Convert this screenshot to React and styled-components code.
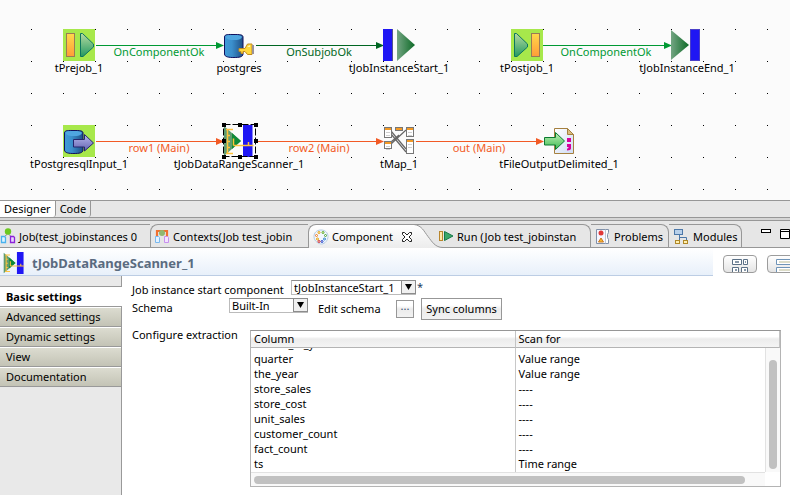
import React, { useLayoutEffect, useRef } from "react";
import styled, { createGlobalStyle } from "styled-components";

const Global = createGlobalStyle`
  * { box-sizing: border-box; }
  body {
    margin: 0;
    background: #fff;
    color: #000;
    font-family: "Lucida Grande", "Noto Sans", sans-serif;
    font-size: 11px;
    line-height: 13px;
    overflow: hidden;
  }
  button, select { font: inherit; color: inherit; margin: 0; }
  svg { display: block; flex: none; }
`;

const Page = styled.div`
  display: flex;
  flex-direction: column;
  min-height: 100vh;
`;

/* ---------- design canvas ---------- */

const Canvas = styled.section`
  position: relative;
  height: 200px;
  background: #fbfbfb;
  overflow: hidden;
`;

const Wires = styled.svg`
  width: 100%;
  height: 100%;
`;

const Node = styled.div`
  position: absolute;
  left: ${(p) => p.$x}px;
  top: ${(p) => p.$y}px;
  width: 32px;
  display: flex;
  flex-direction: column;
  align-items: center;
  white-space: nowrap;
`;

const WireLabel = styled.span`
  position: absolute;
  left: ${(p) => p.$x}px;
  top: ${(p) => p.$y}px;
  width: 96px;
  text-align: center;
  white-space: nowrap;
  color: ${(p) => p.$color};
`;

const GREEN = "#009933";
const DARK = "#006622";
const ORANGE = "#f25a25";

const wires = [
  { x1: 96, x2: 224, y: 45, label: "OnComponentOk", color: GREEN },
  { x1: 256, x2: 384, y: 45, label: "OnSubjobOk", color: DARK },
  { x1: 543, x2: 672, y: 45, label: "OnComponentOk", color: GREEN },
  { x1: 96, x2: 224, y: 141, label: "row1 (Main)", color: ORANGE },
  { x1: 256, x2: 384, y: 141, label: "row2 (Main)", color: ORANGE },
  { x1: 416, x2: 544, y: 141, label: "out (Main)", color: ORANGE },
];

const Gradients = () => (
  <defs>
    <linearGradient id="orange" x2="0" y2="1">
      <stop stopColor="#ffd84a" />
      <stop offset="1" stopColor="#ff9c38" />
    </linearGradient>
    <linearGradient id="green" x2="0" y2="1">
      <stop stopColor="#b5d9a0" />
      <stop offset="1" stopColor="#239a62" />
    </linearGradient>
    <linearGradient id="forest">
      <stop stopColor="#74a583" />
      <stop offset="1" stopColor="#0c6a26" />
    </linearGradient>
    <linearGradient id="barrel">
      <stop stopColor="#3f9bd8" />
      <stop offset="0.4" stopColor="#3b8fcc" />
      <stop offset="1" stopColor="#1f4f86" />
    </linearGradient>
    <linearGradient id="violet" x2="0" y2="1">
      <stop stopColor="#b9b9ee" />
      <stop offset="1" stopColor="#6262b0" />
    </linearGradient>
    <linearGradient id="arrow" x2="0" y2="1">
      <stop stopColor="#c2f2b8" />
      <stop offset="1" stopColor="#3cba52" />
    </linearGradient>
    <linearGradient id="sheet" x2="1" y2="1">
      <stop stopColor="#fff" />
      <stop offset="1" stopColor="#cfdcf4" />
    </linearGradient>
    <pattern id="dots" width="32" height="32" patternUnits="userSpaceOnUse">
      <rect x="31" y="29" width="1" height="1" />
    </pattern>
  </defs>
);

const Icon32 = ({ children }) => (
  <svg width="32" height="32" viewBox="0 0 32 32" aria-hidden="true">{children}</svg>
);

const PrejobIcon = () => (
  <Icon32>
    <rect width="32" height="32" fill="#a7e84b" />
    <rect x="3.5" y="4.5" width="8" height="23" fill="url(#orange)" stroke="#9a7a55" />
    <path d="M17.5 4.5h2L30.500 15v3L20 27.500h-2.500z" fill="url(#green)" stroke="#0d7560" />
  </Icon32>
);

const PostjobIcon = () => (
  <Icon32>
    <rect width="32" height="32" fill="#a7e84b" />
    <path d="M3.500 4.500h2L16.500 15v3L6 27.500h-2.500z" fill="url(#green)" stroke="#0d7560" />
    <rect x="20.500" y="4.500" width="8" height="23" fill="url(#orange)" stroke="#9a7a55" />
  </Icon32>
);

const Barrel = () => (
  <>
    <path d="M1.500 8c0-3 4-2.500 9.500-2.500s9 0 9 2.500v17c0 3-4 3.500-9 3.500s-9.500-.5-9.500-3.500z" fill="url(#barrel)" stroke="#10105e" />
    <path d="M2.500 7.500c1-1.500 4-1.500 8.500-1.500s7.500.5 8 2c-1 2.500-4 3-8 3s-8-.5-8.500-3.500z" fill="#4fa6e0" />
  </>
);

const PostgresIcon = () => (
  <Icon32>
    <Barrel />
    <path d="M16 19.500h6l2.500-4.500h4.500v10.500h-4.500L22 22.500h-2v2h-2v-2h-2z" fill="#ffd83c" stroke="#c08a20" />
    <path d="M24 18l3-2v2z" fill="#fff6b8" />
    <rect x="29" y="16" width="2" height="9" fill="#9a929a" />
  </Icon32>
);

const PostgresInputIcon = () => (
  <Icon32>
    <rect width="32" height="32" fill="#a7e84b" />
    <Barrel />
    <path d="M10.500 14.500h11v-5l9 8.500-9 8v-4h-11z" fill="url(#violet)" stroke="#26266e" />
  </Icon32>
);

const StartIcon = () => (
  <Icon32>
    <rect width="9" height="32" fill="#1f16f4" />
    <path d="M9.500 0v32" stroke="#55558a" />
    <path d="M14 0l18 16-18 16z" fill="url(#forest)" />
  </Icon32>
);

const EndIcon = () => (
  <Icon32>
    <path d="M0 1l18 15L0 31z" fill="url(#forest)" />
    <rect x="19.500" y="0.500" width="9" height="31" fill="#1f16f4" stroke="#4a3fc8" />
  </Icon32>
);

const ScannerArt = () => (
  <>
    <path d="M1 1l17 15L1 31z" fill="#5f9c70" />
    <path d="M9 8l9 8-9 8z" fill="#0f8a38" />
    <rect x="20" y="0" width="9.500" height="32" fill="#1f16f4" />
    <path d="M4.500 4v24M3 4.500h7M4 10.500h3M4 16.500h3M4 22.500h3M3 28.500h7" stroke="#ffc23c" fill="none" strokeWidth="1.500" />
    <path d="M10.500 13.500v7M10.500 20.500h20M25.500 17v4" stroke="#ffc23c" fill="none" strokeWidth="1.500" />
  </>
);

const ScannerIcon = () => (
  <Icon32><ScannerArt /></Icon32>
);

const Selection = styled.svg`
  position: absolute;
  left: -1px;
  top: -2px;
`;

const SelectionHandles = () => (
  <Selection width="37" height="37" aria-hidden="true">
    <rect x="1.500" y="1.500" width="32" height="32" fill="none" stroke="#000" strokeDasharray="7 2" />
    {[0, 16, 32].map((x) =>
      [0, 16, 32].map((y) =>
        x === 16 && y === 16 ? null : <rect key={`${x}-${y}`} x={x} y={y} width="4" height="4" />
      )
    )}
  </Selection>
);

const MapTable = ({ x, y, w, h }) => (
  <g>
    <rect x={x + 0.5} y={y + 0.5} width={w} height={h} fill="#fff" stroke="#777" />
    <rect x={x + 1} y={y + 1} width={w - 1} height="2" fill="#f39a26" />
    {h > 6 && <path d={`M${x + 2} ${y + 5.5}h${w - 3}M${x + 2} ${y + 8.500}h${w - 3}`} stroke="#d0d0d0" />}
  </g>
);

const MapIcon = () => (
  <Icon32>
    <path d="M8 6l15 18M8 9l15 18M8 19L23 5M8 17l8-7" stroke="#666" strokeWidth="1.200" />
    <MapTable x={1} y={2} w={7} h={10} />
    <MapTable x={12} y={2} w={7} h={3} />
    <MapTable x={23} y={2} w={7} h={9} />
    <MapTable x={1} y={16} w={7} h={7} />
    <MapTable x={23} y={14} w={7} h={14} />
  </Icon32>
);

const FileIcon = () => (
  <Icon32>
    <path d="M11.500 3.500h13l6 6v19h-19z" fill="url(#sheet)" stroke="#a5803f" />
    <path d="M24.500 3.500v6h6z" fill="#d9bd7c" stroke="#a5803f" />
    <path d="M24 13h4v4h-4zM24 19h4v4.500c0 1-1.500 2-4 2v-2c1 0 1.500-.5 1.500-1.500H24z" fill="#d6009a" />
    <path d="M1.500 12.500h11v-5l9 8.500-9 8.500v-4.500h-11z" fill="url(#arrow)" stroke="#0c7a30" />
  </Icon32>
);

const nodes = [
  { x: 63, y: 29, label: "tPrejob_1", Icon: PrejobIcon },
  { x: 223, y: 29, label: "postgres", Icon: PostgresIcon },
  { x: 383, y: 29, label: "tJobInstanceStart_1", Icon: StartIcon },
  { x: 511, y: 29, label: "tPostjob_1", Icon: PostjobIcon },
  { x: 671, y: 29, label: "tJobInstanceEnd_1", Icon: EndIcon },
  { x: 63, y: 125, label: "tPostgresqlInput_1", Icon: PostgresInputIcon },
  { x: 223, y: 125, label: "tJobDataRangeScanner_1", Icon: ScannerIcon, selected: true },
  { x: 383, y: 125, label: "tMap_1", Icon: MapIcon },
  { x: 543, y: 125, label: "tFileOutputDelimited_1", Icon: FileIcon },
];

/* ---------- editor page tabs ---------- */

const EditorTabs = styled.nav`
  display: flex;
  height: 18px;
  background: #e7e7e7;
  border-top: 1px solid #979797;
  border-bottom: 1px solid #979797;
`;

const EditorTab = styled.button`
  border: 0;
  border-right: 1px solid #979797;
  border-radius: 0 0 3px 0;
  padding: 0 4px 1px;
  background: ${(p) => (p.$active ? "#fff" : "transparent")};
`;

const Sash = styled.div`
  height: 3px;
  background: #d6d6d6;
  border-bottom: 1px solid #979797;
`;

/* ---------- view tabs ---------- */

const ViewBar = styled.nav`
  display: flex;
  height: 27px;
  padding-top: 3px;
  background: #e6e6e6;
  border-bottom: 1px solid #979797;
`;

const ViewTab = styled.button`
  display: flex;
  flex: 0 0 ${(p) => p.$width}px;
  align-items: center;
  gap: 3px;
  padding: 0 0 0 ${(p) => p.$pad}px;
  white-space: nowrap;
  background: transparent;
  border: 0 solid #979797;
  border-top-width: 1px;
  border-left-width: ${(p) => (p.$edge === "left" ? 1 : 0)}px;
  border-right-width: ${(p) => (p.$edge === "right" ? 1 : 0)}px;
  border-radius: ${(p) => (p.$edge === "left" ? "8px 0 0 0" : p.$edge === "right" ? "0 8px 0 0" : "0")};
`;

const ActiveTab = styled.div`
  display: flex;
  flex: 0 0 106px;
  height: 24px;
  align-items: center;
  gap: 3px;
  padding-left: 4px;
  white-space: nowrap;
  background: linear-gradient(#fff, #ececec);
  border: 1px solid #979797;
  border-width: 1px 0 0 1px;
  border-radius: 8px 0 0 0;
`;

const Slope = styled.svg`
  margin-right: -8px;
`;

const CloseButton = styled.button`
  padding: 0;
  border: 0;
  background: none;
  margin-left: 5px;
`;

const WindowButtons = styled.div`
  display: flex;
  flex: none;
  gap: 9px;
  padding-top: 4px;
  margin-left: auto;
  align-items: flex-start;
`;

const PlainButton = styled.button`
  padding: 0;
  border: 0;
  background: none;
`;

const Icon16 = ({ children }) => (
  <svg width="16" height="16" viewBox="0 0 16 16" aria-hidden="true">{children}</svg>
);

const JobIcon = () => (
  <Icon16>
    <path d="M7.500 6L4 9M8.500 6l4 4" stroke="#888" />
    <circle cx="8" cy="3.500" r="3.200" fill="#6cc820" />
    <path d="M1.500 8.500h3l1 1v5h-4z" fill="#dff3ff" stroke="#4ab2ee" strokeWidth="1.300" />
    <path d="M10.500 8.500h3l1 1v5h-4z" fill="#e8d6ff" stroke="#8c22d8" strokeWidth="1.300" />
  </Icon16>
);

const ContextsIcon = () => (
  <Icon16>
    <path d="M3 12V3h10v9" fill="none" stroke="#f07030" strokeWidth="2.200" />
    <circle cx="8" cy="5" r="3" fill="#90b870" />
    <path d="M1.500 8.500h3l1 1v5h-4z" fill="#e4f2ff" stroke="#7ab8ee" />
    <path d="M10.500 8.500h3l1 1v5h-4z" fill="#f4e4ff" stroke="#c890ee" />
  </Icon16>
);

const PaletteIcon = () => (
  <Icon16>
    <path d="M8 1c4.500 0 7 3 7 6.500S12 15 8.500 15C6 15 1 12.500 1 7.500 1 4 3.500 1 8 1z" fill="#f2f7ff" stroke="#b4cce4" />
    {[[6, 3.500, "#e8a000"], [10, 3.500, "#58a818"], [12.500, 6.500, "#48a030"], [3.500, 6.500, "#f07820"], [4.500, 10, "#e8a000"], [11.500, 10, "#2880c8"], [9, 12.500, "#2040c8"], [6, 12.500, "#d02828"]].map(([x, y, c]) => (
      <circle key={`${x}-${y}`} cx={x} cy={y} r="1" fill="#fff" stroke={c} />
    ))}
  </Icon16>
);

const RunIcon = () => (
  <Icon16>
    <rect x="1.500" y="3.500" width="3" height="9" fill="#ffe9a8" stroke="#b8862c" />
    <path d="M6.500 3.500L15 8l-8.500 4.500z" fill="#3ca868" stroke="#187848" />
  </Icon16>
);

const ProblemsIcon = () => (
  <Icon16>
    <path d="M1.500 1.500h9v14h-9z" fill="#f6f6ff" stroke="#8090a8" />
    <path d="M10.500 1.500h3v3l-1 2v3l1 2v4h-3" fill="#fff" stroke="#8090a8" />
    <circle cx="6" cy="5" r="2.500" fill="#e03838" />
    <path d="M6 10l2.500 4h-5z" fill="#f8b830" stroke="#c87820" />
  </Icon16>
);

const ModulesIcon = () => (
  <Icon16>
    <path d="M5.500 7v5M5.500 9.500h7V12" stroke="#4d78a8" fill="none" />
    <rect x="0.500" y="1.500" width="8" height="5" fill="#b8d0ea" stroke="#4d78a8" />
    <rect x="1.500" y="12.500" width="4" height="3" fill="#fff0b0" stroke="#b08828" />
    <rect x="9.500" y="12.500" width="4" height="3" fill="#fff0b0" stroke="#b08828" />
  </Icon16>
);

/* ---------- component header ---------- */

const Header = styled.header`
  display: flex;
  height: 28px;
  overflow: hidden;
`;

const Title = styled.h1`
  display: flex;
  flex: 1;
  align-items: center;
  gap: 6px;
  margin: 0;
  padding: 3px 0 0 3px;
  font-size: 13px;
  color: #5a6b80;
  background: linear-gradient(#fff, #e8f0fa);
  border-bottom: 1px solid #bccde4;
`;

const Tools = styled.div`
  display: flex;
  flex: 0 0 77px;
  gap: 10px;
  padding: 7px 0 0 10px;
  overflow: hidden;
`;

const ToolButton = styled.button`
  flex: 0 0 34px;
  height: 18px;
  padding: 3px 0 0 8px;
  border: 1px solid #9c9c9c;
  border-radius: 4px;
  background: linear-gradient(#fff, #e4e4e4);
  overflow: hidden;
`;

/* ---------- settings ---------- */

const Body = styled.div`
  display: flex;
  flex: 1;
`;

const Sidebar = styled.nav`
  flex: 0 0 122px;
  padding-top: 10px;
  background: #e9e9e9;
  border-right: 1px solid #999;
`;

const SideTab = styled.button`
  display: block;
  width: calc(100% + ${(p) => (p.$active ? 1 : 0)}px);
  height: 20px;
  padding: 0 0 1px 6px;
  text-align: left;
  border: 0;
  border-top: 1px solid #999;
  font-weight: ${(p) => (p.$active ? 700 : 400)};
  background: ${(p) => (p.$active ? "#fff" : "linear-gradient(#fff 1px, #dcdcd0 1px, #c3c3b5)")};
`;

const SideEnd = styled.div`
  border-top: 1px solid #999;
`;

const Form = styled.main`
  flex: 1;
  min-width: 0;
  padding: 4px 9px 8px 10px;
`;

const Row = styled.div`
  display: flex;
  align-items: flex-start;
  min-height: ${(p) => p.$height}px;
  margin-bottom: ${(p) => p.$gap || 0}px;
`;

const Label = styled.label`
  flex: 0 0 ${(p) => p.$width}px;
  padding-top: ${(p) => p.$top || 0}px;
  white-space: nowrap;
`;

const SelectBox = styled.span`
  display: flex;
  flex: 0 0 ${(p) => p.$width}px;
  position: relative;
  height: 15px;
  margin-right: ${(p) => p.$after}px;
`;

const Select = styled.select`
  appearance: none;
  width: 100%;
  padding: 0 14px 0 2px;
  line-height: 13px;
  background: #fff;
  border: 1px solid #bbb;
  border-top-color: #8c8c8c;
  border-radius: 0;
`;

const Drop = styled.svg`
  position: absolute;
  right: 0;
  top: 0;
  pointer-events: none;
`;

const FlatButton = styled.button`
  flex: 0 0 ${(p) => p.$width}px;
  height: ${(p) => p.$height}px;
  padding: 0 0 1px;
  white-space: nowrap;
  background: linear-gradient(#fff 30%, #ebebeb 50%, #f2f2f2);
  border: 1px solid #979797;
`;

const DotsButton = styled(FlatButton)`
  display: flex;
  justify-content: center;
  margin: 2px 7px 0 0;
  line-height: 9px;
  color: #334d70;
`;

const Star = styled.span`
  color: #203c60;
`;

const TableFrame = styled.div`
  display: grid;
  flex: 1;
  min-width: 0;
  grid-template-columns: 1fr 15px;
  grid-template-rows: 17px 124px 15px;
  margin-top: 2px;
  border: 1px solid #b4b4b4;
  border-top-color: #979797;
  border-bottom: 0;
  box-shadow: inset 0 -1px #b4b4b4;
`;

const Viewport = styled.div`
  grid-row: 1 / 3;
  grid-column: 1 / 3;
  overflow: hidden;
  background: #fff;
`;

const Table = styled.table`
  width: 100%;
  table-layout: fixed;
  border-spacing: 0;
`;

const HeadCell = styled.th`
  position: sticky;
  top: 0;
  height: 17px;
  padding: 1px 3px 2px;
  font-weight: 400;
  text-align: left;
  background: linear-gradient(#fff 35%, #ececec 50%, #f4f4f4);
  border-bottom: 1px solid #b4b4b4;
  border-right: 1px solid #c4c4c4;
`;

const Cell = styled.td`
  height: 15px;
  padding: 0 3px 2px;
  vertical-align: top;
  border-right: ${(p) => (p.$line ? "1px solid #c8c8c8" : "0")};
  overflow: hidden;
  white-space: nowrap;
`;

const TrackY = styled.div`
  grid-row: 2;
  grid-column: 2;
  z-index: 1;
  padding: 12px 3px 3px;
  background: #f9f9f9;
  border-left: 1px solid #e2e2e2;
`;

const TrackX = styled.div`
  grid-row: 3;
  grid-column: 1;
  margin-bottom: 1px;
  padding: 3px 20px 2px 3px;
  background: #f9f9f9;
  border-top: 1px solid #e2e2e2;
`;

const Thumb = styled.div`
  width: 100%;
  height: 100%;
  border-radius: 4px;
  background: #c1c1c1;
`;

const rows = [
  ["month_of_year", ""],
  ["quarter", "Value range"],
  ["the_year", "Value range"],
  ["store_sales", "----"],
  ["store_cost", "----"],
  ["unit_sales", "----"],
  ["customer_count", "----"],
  ["fact_count", "----"],
  ["ts", "Time range"],
];

function ExtractionTable() {
  const view = useRef(null);
  useLayoutEffect(() => {
    view.current.scrollTop = view.current.scrollHeight;
  }, []);
  return (
    <TableFrame>
      <Viewport ref={view}>
        <Table aria-label="Configure extraction">
          <thead>
            <tr><HeadCell>Column</HeadCell><HeadCell>Scan for</HeadCell></tr>
          </thead>
          <tbody>
            {rows.map(([column, scan]) => (
              <tr key={column}><Cell $line>{column}</Cell><Cell>{scan}</Cell></tr>
            ))}
          </tbody>
        </Table>
      </Viewport>
      <TrackY><Thumb /></TrackY>
      <TrackX><Thumb /></TrackX>
    </TableFrame>
  );
}

const Dropdown = ({ id, width, after, value }) => (
  <SelectBox $width={width} $after={after}>
    <Select id={id} defaultValue={value}><option>{value}</option></Select>
    <Drop width="15" height="14" aria-hidden="true">
      <rect x="0.500" y="0.500" width="14" height="13" fill="#f0f0f0" stroke="#8c8c8c" />
      <path d="M4 4h7l-3.500 6z" />
    </Drop>
  </SelectBox>
);

export default function App() {
  return (
    <Page>
      <Global />
      <Canvas>
        <Wires>
          <Gradients />
          <rect width="100%" height="100%" fill="url(#dots)" />
          {wires.map((w) => (
            <g key={`${w.x1}-${w.y}`} fill={w.color}>
              <rect x={w.x1} y={w.y} width={w.x2 - w.x1 - 4} height="1" />
              <path d={`M${w.x2 - 8} ${w.y - 3}l8 3.500-8 3.500z`} />
            </g>
          ))}
        </Wires>
        {wires.map((w) => (
          <WireLabel key={`${w.x1}-${w.y}`} $x={w.x1 + 15} $y={w.y} $color={w.color}>{w.label}</WireLabel>
        ))}
        {nodes.map(({ x, y, label, Icon, selected }) => (
          <Node key={label} $x={x} $y={y}>
            <Icon />
            {selected && <SelectionHandles />}
            <span>{label}</span>
          </Node>
        ))}
      </Canvas>

      <EditorTabs>
        <EditorTab $active>Designer</EditorTab>
        <EditorTab>Code</EditorTab>
      </EditorTabs>
      <Sash />

      <ViewBar>
        <ViewTab $width={150} $pad={0}><JobIcon />Job(test_jobinstances 0</ViewTab>
        <ViewTab $width={158} $pad={3} $edge="left"><ContextsIcon />Contexts(Job test_jobin</ViewTab>
        <ActiveTab>
          <PaletteIcon />Component
          <CloseButton aria-label="Close">
            <svg width="12" height="12" viewBox="0 0 12 12">
              <path d="M1.500 1.500h2L6 4l2.500-2.500h2v2L8 6l2.500 2.500v2h-2L6 8l-2.500 2.500h-2v-2L4 6 1.500 3.500z" fill="#fff" stroke="#222" />
            </svg>
          </CloseButton>
        </ActiveTab>
        <Slope width="29" height="24" viewBox="0 0 29 24" aria-hidden="true">
          <defs>
            <linearGradient id="slope" x2="0" y2="1"><stop stopColor="#fff" /><stop offset="1" stopColor="#ececec" /></linearGradient>
          </defs>
          <path d="M0 .5c8 1 10 7 14 12s7 11 15 11v.5H0z" fill="url(#slope)" />
          <path d="M0 .5c8 1 10 7 14 12s7 11 15 11M0 .5h29" fill="none" stroke="#979797" />
        </Slope>
        <ViewTab $width={156} $pad={3} $edge="right"><RunIcon />Run (Job test_jobinstan</ViewTab>
        <ViewTab $width={78} $pad={4} $edge="right"><ProblemsIcon />Problems</ViewTab>
        <ViewTab $width={73} $pad={5} $edge="right"><ModulesIcon />Modules</ViewTab>
        <WindowButtons>
          <PlainButton aria-label="Minimize">
            <svg width="10" height="5"><rect x="0.500" y="1.500" width="9" height="3" fill="#fff" stroke="#000" /></svg>
          </PlainButton>
          <PlainButton aria-label="Maximize">
            <svg width="10" height="11"><path d="M.5 1.500h9v9h-9zM.5 3.500h9" fill="#fff" stroke="#000" /></svg>
          </PlainButton>
        </WindowButtons>
      </ViewBar>

      <Header>
        <Title>
          <svg width="23" height="22" viewBox="0 0 33 32" preserveAspectRatio="none" aria-hidden="true"><ScannerArt /></svg>
          tJobDataRangeScanner_1
        </Title>
        <Tools>
          <ToolButton aria-label="Grid layout">
            <svg width="16" height="14">
              <path d="M.5.5h9v5h-9zM11.500.5h4v5h-4zM.5 8.500h6v5h-6zM9.500 8.500h6v5h-6z" fill="#fff" stroke="#5b7086" />
              <path d="M3 3h4M13 3h1M3 11h2M12 11h2" stroke="#8898a8" strokeWidth="2" />
            </svg>
          </ToolButton>
          <ToolButton aria-label="List layout">
            <svg width="20" height="14">
              <path d="M.5.5h19v5H.5zM.5 8.500h19v5H.5z" fill="#fff" stroke="#6f94b8" />
              <path d="M3 3h15M3 11h15" stroke="#dcdcc8" strokeWidth="2" />
            </svg>
          </ToolButton>
        </Tools>
      </Header>

      <Body>
        <Sidebar>
          <SideTab $active>Basic settings</SideTab>
          <SideTab>Advanced settings</SideTab>
          <SideTab>Dynamic settings</SideTab>
          <SideTab>View</SideTab>
          <SideTab>Documentation</SideTab>
          <SideEnd />
        </Sidebar>
        <Form>
          <Row $height={18}>
            <Label htmlFor="start" $width={159} $top={3}>Job instance start component</Label>
            <Dropdown id="start" width={125} after={1} value="tJobInstanceStart_1" />
            <Star>*</Star>
          </Row>
          <Row $height={22} $gap={8}>
            <Label htmlFor="schema" $width={97} $top={3}>Schema</Label>
            <Dropdown id="schema" width={79} after={10} value="Built-In" />
            <Label htmlFor="edit" $width={78} $top={4}>Edit schema</Label>
            <DotsButton id="edit" $width={18} $height={18}>...</DotsButton>
            <FlatButton $width={81} $height={22}>Sync columns</FlatButton>
          </Row>
          <Row>
            <Label as="span" $width={118}>Configure extraction</Label>
            <ExtractionTable />
          </Row>
        </Form>
      </Body>
    </Page>
  );
}
